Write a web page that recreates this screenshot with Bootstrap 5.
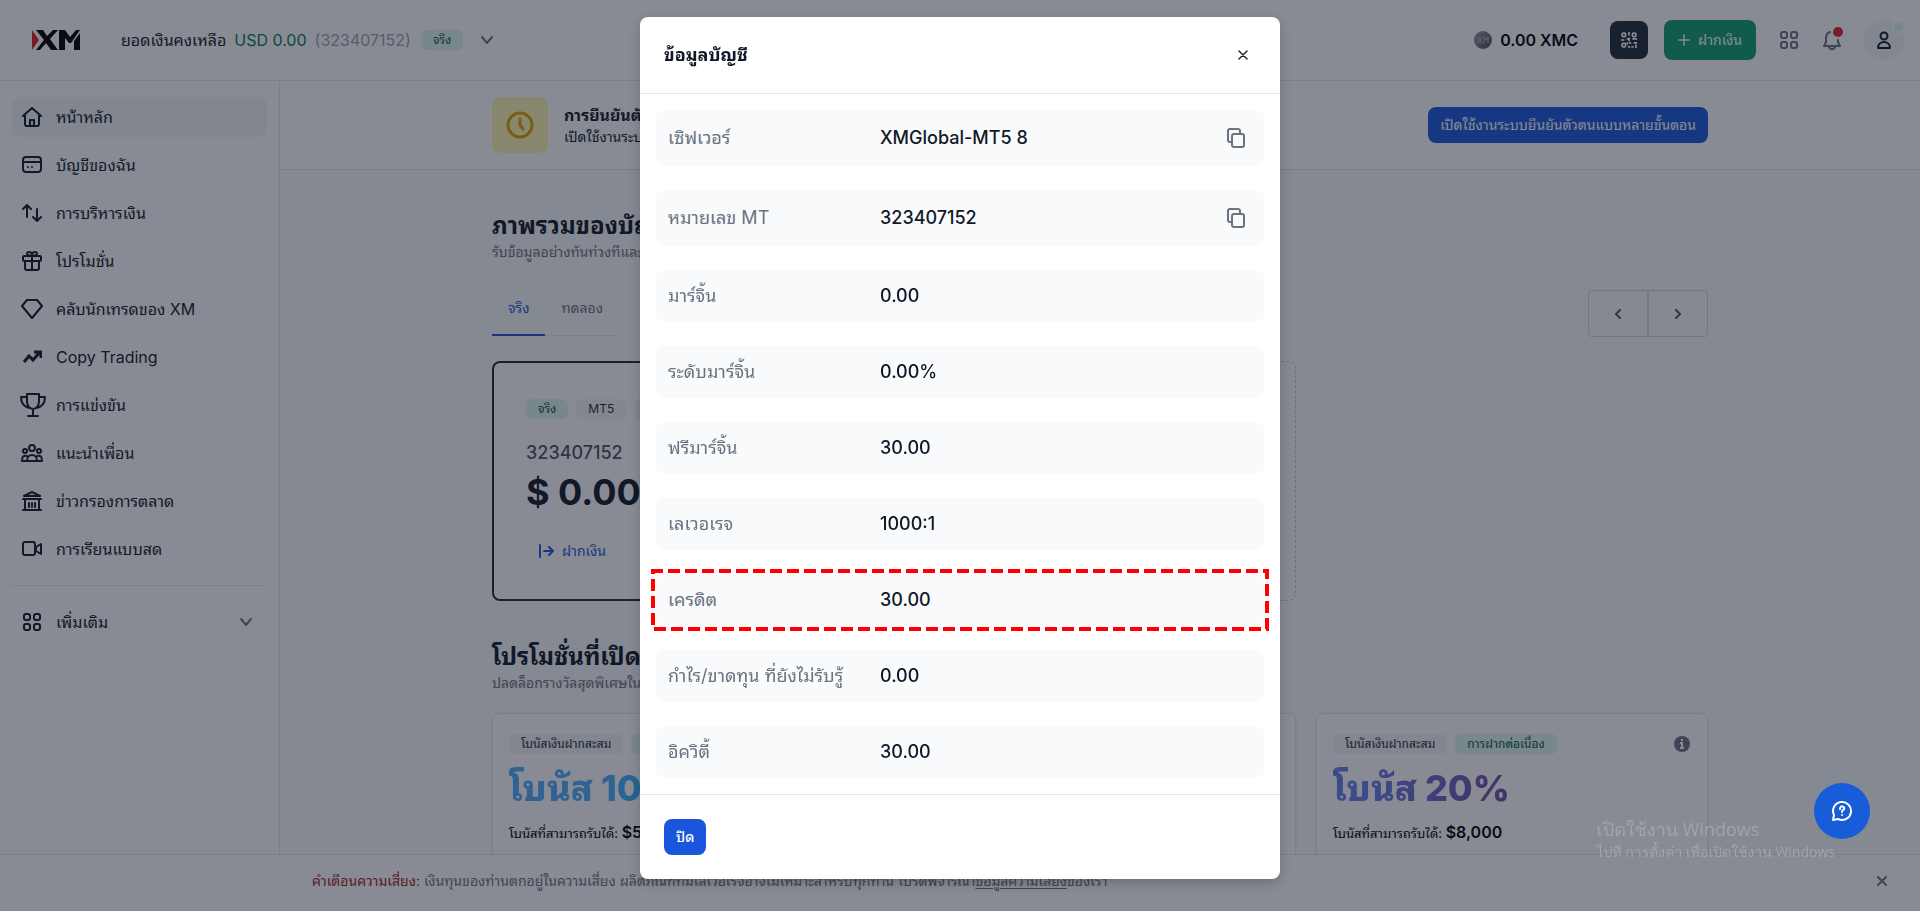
<!DOCTYPE html>
<html lang="th">
<head>
<meta charset="utf-8">
<meta name="viewport" content="width=device-width, initial-scale=1">
<title>XM</title>
<link href="https://cdn.jsdelivr.net/npm/bootstrap@5.3.0/dist/css/bootstrap.min.css" rel="stylesheet">
<script src="https://cdn.jsdelivr.net/npm/bootstrap@5.3.0/dist/js/bootstrap.bundle.min.js" defer></script>
<style>
:root{--ink:#111928;--muted:#6b7280;--line:#e5e7eb;--blue:#1a56db;--green:#0e9f6e}
body{font-family:Inter,"Leelawadee UI",Tahoma,"Noto Sans Thai Looped",Loma,"Liberation Sans",sans-serif;color:var(--ink);background:#f9fafb;font-size:16px;line-height:24px;overflow:hidden}
a{color:inherit;text-decoration:none}
svg{display:block;flex:none}
.ic{fill:none;stroke:currentColor;stroke-width:2;stroke-linecap:round;stroke-linejoin:round}
.shell{height:100vh}
.topbar{height:81px;border-bottom:1px solid var(--line);padding:0 16px 0 32px;background:#fff}
.balance{margin-left:41px}
.usd{color:#057a55}
.acc-id{color:#9ca3af;margin-right:2px}
.muted{color:var(--muted)}
.tag{font-size:12px;line-height:20px;padding:0 12px;border-radius:6px;background:#f3f4f6;color:#1f2a37;white-space:nowrap}
.tag-green{background:#def7ec;color:#03543f}
.side{width:280px;border-right:1px solid var(--line);padding:16px 12px;background:#fff}
.side .nav-link{height:40px;padding:0 10px;border-radius:8px;color:var(--ink);display:flex;align-items:center;gap:14px;margin-bottom:8px}
.side .nav-link.active{background:#f3f4f6}
.side hr{margin:16px 0;color:#9ca3af}
.side .wide{margin:0 -1px}
.side .trophy{margin:0 -4px 0 -2px}
.inner{max-width:1280px;margin:0 auto;padding:0 32px}
.banner{background:#fff;border-bottom:1px solid var(--line);padding:16px 0}
.btn{font-size:14px;line-height:20px;border-radius:8px;border:0}
.btn-blue,.btn-blue:hover{background:var(--blue);color:#fff;padding:8px 12px}
.btn-green{background:var(--green);color:#fff;height:40px;padding:0 14px}
.btn-qr{background:#1f2a37;color:#fff;width:38px;height:38px;padding:0}
.clock{width:56px;height:56px;border-radius:8px;background:#fdf6b2;color:#e3a008}
.clock .ic{stroke-width:3}
.avatar{width:40px;height:40px;background:#f3f4f6;color:var(--ink);border-radius:50%;margin-left:22px}
.dot{position:absolute;border-radius:50%}
.dot-red{width:10px;height:10px;background:#e02424;right:-1px;top:-2px}
.dot-mint{width:14px;height:14px;background:#def7ec;border:2px solid #fff;right:-2px;top:0}
.t14{font-size:14px;line-height:20px}
h2{font-size:24px;line-height:32px;font-weight:700;margin:0}
.tabrow{padding:28px 0 24px}
.tabs2{border-bottom:1px solid var(--line)}
.tabs2 .nav-link{padding:8px 16px 16px;font-size:14px;line-height:20px;color:var(--muted);border:0;border-bottom:2px solid transparent;margin-bottom:-1px;background:none}
.tabs2 .nav-link.active{color:var(--blue);border-color:var(--blue)}
.pager .btn{width:60px;height:47px;border:1px solid #d1d5db;border-radius:4px 0 0 4px;color:#4b5563}
.pager .btn:last-child{border-radius:0 4px 4px 0}
.pager .btn svg{margin:auto}
.cards3{display:grid;grid-template-columns:repeat(3,1fr);gap:20px}
.acct{height:240px;border:2px solid #1f2a37;border-radius:8px;background:#fff;padding:36px 32px}
.acct-empty{border:1px dashed #c3c8d0;border-radius:8px}
.acct-no{font-size:18px;line-height:28px;font-weight:500;color:#4b5563;margin-top:20px}
.big{font-size:36px;line-height:50px;font-weight:700}
.promo{border:1px solid var(--line);border-radius:8px;background:#fff;padding:20px 16px;height:240px;box-shadow:0 1px 3px rgba(0,0,0,.08)}
.promo .amount{font-size:16px;font-weight:600;color:#000}
.promo .cap{font-size:13px;color:#000}
.grad{background-clip:text;-webkit-background-clip:text;color:transparent;width:max-content;line-height:64px;font-weight:800;margin-top:2px}
.g1{background-image:linear-gradient(90deg,#4facfe 50%,#00c2fe)}
.g2{background-image:linear-gradient(90deg,#667eea 20%,#764ba2)}
.main{background:#f9fafb;min-width:0;overflow:hidden}
.risk{height:57px;border-top:1px solid var(--line);background:#fff;padding:0 32px 4px 312px;position:fixed;left:0;right:0;bottom:0}
.risk b{color:#9b1c1c;font-weight:400}
.risk u{text-underline-offset:2px}
.modal-backdrop{--bs-backdrop-bg:#111827;--bs-backdrop-opacity:.5}
.modal-dialog{max-width:640px;margin:17px auto}
.modal-content{border:0;border-radius:8px;box-shadow:0 4px 12px rgba(0,0,0,.2)}
.modal-header{height:77px;padding:0 24px;border-color:var(--line)}
.modal-title{font-size:18px;line-height:28px;font-weight:700}
.modal-body{padding:16px;display:grid;gap:24px}
.info{background:#f9fafb;border-radius:8px;padding:12px;font-size:18px;line-height:28px;margin:0}
.info dt{width:212px;font-weight:400;color:var(--muted);white-space:nowrap}
.info dd{margin:0;flex:1;font-weight:500}
.info .btn{padding:6px;color:var(--muted)}
.dashes{position:absolute;top:-5px;left:-5px;width:calc(100% + 10px);height:calc(100% + 10px)}
.dashes rect{x:2px;y:2px;width:calc(100% - 4px);height:calc(100% - 4px);fill:none;stroke:red;stroke-width:4px;stroke-dasharray:12 5;stroke-dashoffset:2px}
.modal-footer{padding:24px;border-color:var(--line);justify-content:flex-start}
.modal-footer>*{margin:0;font-weight:500}
.help{position:fixed;right:50px;bottom:72px;width:56px;height:56px;border-radius:50%;background:#175cd9!important;color:#fff;z-index:1070}
.wm{position:fixed;right:85px;bottom:48px;z-index:1065;color:#a3a4a6;font-family:"Open Sans","Leelawadee UI",Loma,sans-serif;pointer-events:none}
.wm div{font-size:18px;line-height:24px}
.wm p{font-size:14px;line-height:22px;margin:0}
</style>
</head>
<body>
<div class="shell d-flex flex-column">
<header class="topbar d-flex align-items-center flex-shrink-0">
  <a href="#" aria-label="XM"><svg width="48" height="20" viewBox="0 0 48 20"><path fill="#e11b22" d="M0 0l7 10-7 10z"/><path fill="#000" d="M4 0h7l4 6 6-6h5l-8 9 8 11h-7l-5-7-6 7H4l8-10zM27 0h6l5 7 6-7h4l-9 13h-2l-4-5v12h-6zM48 3v17h-6v-9z"/></svg></a>
  <div class="balance d-flex align-items-center gap-2 flex-grow-1">
    <span>ยอดเงินคงเหลือ</span><span class="usd">USD 0.00</span><span class="acc-id">(323407152)</span><span class="tag tag-green">จริง</span>
    <button class="btn p-0 ms-2 muted" aria-label="บัญชี"><svg class="ic" width="16" height="16" viewBox="0 0 16 16"><path d="M3 5l5 6 5-6"/></svg></button>
  </div>
  <div class="d-flex align-items-center">
    <svg class="me-2" width="18" height="18" viewBox="0 0 18 18"><defs><linearGradient id="coin" x1="0" y1="0" x2="1" y2="1"><stop offset="0" stop-color="#9a9aa0"/><stop offset=".5" stop-color="#77777d"/><stop offset="1" stop-color="#4a4a50"/></linearGradient></defs><circle cx="9" cy="9" r="9" fill="url(#coin)"/><path d="M4 6l4 6M8 6l-4 6M10 12V6l2 3 2-3v6" fill="none" stroke="#b5b5bb"/></svg>
    <span class="fw-semibold me-4 text-black">0.00 XMC</span>
    <button class="btn btn-qr d-flex align-items-center justify-content-center ms-2 me-3" aria-label="QR"><svg width="16" height="16" viewBox="0 0 14 14" fill="none" stroke="currentColor" stroke-width="1.500"><rect x="1" y="1" width="3" height="3" rx="1"/><rect x="10" y="1" width="3" height="3" rx="1"/><rect x="1" y="10" width="3" height="3" rx="1"/><path d="M7 0v3M0 7h3M5 6h3M7 5v3M10 6h4M7 9.500h2M5.500 9v2M7 12v2M9 13h2M11 9.500h3M13 11v3"/></svg></button>
    <button class="btn btn-green d-flex align-items-center gap-2"><svg class="ic" width="12" height="12" viewBox="0 0 12 12"><path d="M6 1v10M1 6h10" stroke-width="1.500"/></svg>ฝากเงิน</button>
    <button class="btn p-0 ms-4 muted" aria-label="แอป"><svg class="ic" width="18" height="18" viewBox="0 0 18 18"><rect x="1" y="1" width="6" height="6" rx="2"/><rect x="11" y="1" width="6" height="6" rx="2"/><rect x="1" y="11" width="6" height="6" rx="2"/><rect x="11" y="11" width="6" height="6" rx="2"/></svg></button>
    <button class="btn p-0 ms-4 muted position-relative" aria-label="แจ้งเตือน"><svg class="ic" width="20" height="22" viewBox="0 0 20 22"><path d="M8 3C5 4 4 6 4 9v4l-2 4h16l-2-4v-2M7 18c1 3 5 3 6 0"/></svg><span class="dot dot-red"></span></button>
    <a href="#" class="avatar d-flex align-items-center justify-content-center position-relative" aria-label="โปรไฟล์"><svg class="ic" width="14" height="18" viewBox="0 0 14 18"><circle cx="7" cy="5" r="3.500"/><path d="M1 17c0-8 12-8 12 0z"/></svg><span class="dot dot-mint"></span></a>
  </div>
</header>
<div class="d-flex flex-grow-1" style="min-height:0">
<nav class="side flex-shrink-0">
  <a class="nav-link active" href="#"><svg class="ic" width="20" height="20" viewBox="0 0 20 20"><path d="M1 9l9-8 9 8M3 8v9q0 2 2 2h10q2 0 2-2V8M8 19v-6h4v6"/></svg>หน้าหลัก</a>
  <a class="nav-link" href="#"><svg class="ic" width="20" height="20" viewBox="0 0 20 20"><rect x="1" y="2" width="18" height="15" rx="3"/><path d="M1 7h18M6 12v0M10 12v0"/></svg>บัญชีของฉัน</a>
  <a class="nav-link" href="#"><svg class="ic" width="20" height="20" viewBox="0 0 20 20"><path d="M5 14V2M1 6l4-4 4 4M15 6v12M11 14l4 4 4-4"/></svg>การบริหารเงิน</a>
  <a class="nav-link" href="#"><svg class="ic" width="20" height="20" viewBox="0 0 20 20"><rect x="1" y="5" width="18" height="5" rx="1"/><path d="M3 10v7q0 2 2 2h10q2 0 2-2v-7M10 5v14M10 5C4 5 4 1 7 1c2 0 3 2 3 4 0-2 1-4 3-4 3 0 3 4-3 4"/></svg>โปรโมชั่น</a>
  <a class="nav-link" href="#"><svg class="ic wide" width="22" height="20" viewBox="0 0 22 20"><path d="M6 1h10l5 6-10 12L1 7z"/></svg>คลับนักเทรดของ XM</a>
  <a class="nav-link" href="#"><svg class="ic" width="20" height="20" viewBox="0 0 20 20"><path d="M2 15l5-6 4 4 7-8M12 5h7v6" style="stroke-linecap:butt;stroke-linejoin:miter;stroke-width:3px"/></svg>Copy Trading</a>
  <a class="nav-link" href="#"><svg class="ic trophy" width="26" height="24" viewBox="0 0 26 24"><path d="M7 1h12v7c0 5-3 8-6 8s-6-3-6-8zM7 4H1c0 7 3 10 9 11M19 4h6c0 7-3 10-9 11M13 16v7M8 23h10"/></svg><span>การแข่งขัน</span></a>
  <a class="nav-link" href="#"><svg class="ic wide" width="22" height="18" viewBox="0 0 22 18"><circle cx="11" cy="4" r="3"/><circle cx="4" cy="7" r="2"/><circle cx="18" cy="7" r="2"/><path d="M6 17c0-8 10-8 10 0zM6 17H1c0-4 1-6 5-5M16 17h5c0-4-1-6-5-5"/></svg>แนะนำเพื่อน</a>
  <a class="nav-link" href="#"><svg class="ic" width="20" height="20" viewBox="0 0 20 20"><path d="M10 1l8 4H2zM1 8h18M3 8v11M17 8v11M1 19h18M7 12v4M10 12v4M13 12v4"/></svg>ข่าวกรองการตลาด</a>
  <a class="nav-link" href="#"><svg class="ic" width="20" height="16" viewBox="0 0 20 16"><rect x="1" y="1" width="12" height="13" rx="2"/><path d="M14 6l5-3v10l-5-3z"/></svg>การเรียนแบบสด</a>
  <hr>
  <a class="nav-link" href="#"><svg class="ic" width="20" height="20" viewBox="0 0 20 20"><rect x="2" y="2" width="6" height="6" rx="2"/><rect x="12" y="2" width="6" height="6" rx="2"/><rect x="2" y="12" width="6" height="6" rx="2"/><rect x="12" y="12" width="6" height="6" rx="2"/></svg>เพิ่มเติม<svg class="ic ms-auto muted me-1" width="14" height="14" viewBox="0 0 14 14"><path d="M2 4l5 6 5-6"/></svg></a>
</nav>
<main class="main flex-grow-1">
  <section class="banner"><div class="inner d-flex align-items-center">
    <span class="clock d-flex align-items-center justify-content-center me-3"><svg class="ic" width="28" height="28" viewBox="0 0 28 28"><circle cx="14" cy="14" r="12"/><path d="M14 8v6l3 4"/></svg></span>
    <div class="flex-grow-1"><div class="fw-bold">การยืนยันตัว</div><div class="t14">เปิดใช้งานระบบ</div></div>
    <button class="btn btn-blue">เปิดใช้งานระบบยืนยันตัวตนแบบหลายขั้นตอน</button>
  </div></section>
  <div class="inner pt-4">
    <div class="pt-3"><h2>ภาพรวมของบัญชี</h2><p class="t14 muted mb-0">รับข้อมูลอย่างทันท่วงทีและ</p></div>
    <div class="tabrow d-flex align-items-start justify-content-between">
      <div class="nav tabs2"><button class="nav-link active">จริง</button><button class="nav-link">ทดลอง</button></div>
      <div class="pager d-flex"><button class="btn" aria-label="ก่อนหน้า"><svg class="ic" width="8" height="10" viewBox="0 0 8 10"><path d="M6 1L2 5l4 4"/></svg></button><button class="btn" aria-label="ถัดไป"><svg class="ic" width="8" height="10" viewBox="0 0 8 10"><path d="M2 1l4 4-4 4"/></svg></button></div>
    </div>
    <div class="cards3">
      <article class="acct">
        <div class="d-flex gap-2"><span class="tag tag-green">จริง</span><span class="tag">MT5</span><span class="tag">Standard</span></div>
        <div class="acct-no">323407152</div>
        <div class="big">$ 0.00</div>
        <a href="#" class="d-flex align-items-center gap-2 t14 mt-4 ms-2 ps-1" style="color:#1a56db"><svg class="ic" width="16" height="14" viewBox="0 0 16 14"><path d="M2 1v12M6 7h9M11 3l4 4-4 4"/></svg>ฝากเงิน</a>
      </article>
      <div class="acct-empty"></div>
    </div>
    <div class="pt-4 mt-3"><h2>โปรโมชั่นที่เปิด</h2><p class="t14 muted mb-0">ปลดล็อกรางวัลสุดพิเศษใน</p></div>
    <div class="cards3 pt-3 mt-1">
      <article class="promo"><div class="d-flex gap-2"><span class="tag">โบนัสเงินฝากสะสม</span><span class="tag tag-green">การฝาก</span></div><div class="big grad g1">โบนัส 100%</div><div class="cap">โบนัสที่สามารถรับได้: <span class="amount">$500</span></div></article>
      <article class="promo"></article>
      <article class="promo"><div class="d-flex gap-2 align-items-center"><span class="tag">โบนัสเงินฝากสะสม</span><span class="tag tag-green">การฝากต่อเนื่อง</span><svg class="ms-auto" width="18" height="18" viewBox="0 0 18 18"><circle cx="9" cy="9" r="8" fill="#6b7280"/><path d="M9 4v2M7 8h2v5M7 13h4" fill="none" stroke="#fff" stroke-width="2"/></svg></div><div class="big grad g2">โบนัส 20%</div><div class="cap">โบนัสที่สามารถรับได้: <span class="amount">$8,000</span></div></article>
    </div>
  </div>
</main>
</div>
<footer class="risk d-flex align-items-center justify-content-between t14 muted">
  <div><b>คำเตือนความเสี่ยง:</b> เงินทุนของท่านตกอยู่ในความเสี่ยง ผลิตภัณฑ์ที่มีเลเวอเรจอาจไม่เหมาะสำหรับทุกท่าน โปรดพิจารณา<a href="#"><u>ข้อมูลความเสี่ยง</u></a>ของเรา</div>
  <button class="btn p-0 muted" aria-label="ปิด"><svg class="ic" width="12" height="12" viewBox="0 0 12 12"><path d="M2 2l8 8M10 2l-8 8"/></svg></button>
</footer>
</div>

<div class="modal-backdrop show"></div>
<div class="modal show d-block" tabindex="-1" role="dialog" aria-labelledby="mt">
<div class="modal-dialog"><div class="modal-content">
  <div class="modal-header"><h5 class="modal-title" id="mt">ข้อมูลบัญชี</h5><button class="btn p-2" aria-label="ปิด"><svg class="ic" width="10" height="10" viewBox="0 0 10 10"><path stroke-width="1.500" d="M1 1l8 8M9 1L1 9"/></svg></button></div>
  <div class="modal-body">
    <dl class="info d-flex align-items-center"><dt>เซิฟเวอร์</dt><dd>XMGlobal-MT5 8</dd><button class="btn" aria-label="คัดลอก"><svg class="ic" width="20" height="20" viewBox="0 0 20 20"><rect x="6" y="6" width="12" height="13" rx="2"/><path d="M6 14H4q-2 0-2-2V3q0-2 2-2h8q2 0 2 2v3"/></svg></button></dl>
    <dl class="info d-flex align-items-center"><dt>หมายเลข MT</dt><dd>323407152</dd><button class="btn" aria-label="คัดลอก"><svg class="ic" width="20" height="20" viewBox="0 0 20 20"><rect x="6" y="6" width="12" height="13" rx="2"/><path d="M6 14H4q-2 0-2-2V3q0-2 2-2h8q2 0 2 2v3"/></svg></button></dl>
    <dl class="info d-flex"><dt>มาร์จิ้น</dt><dd>0.00</dd></dl>
    <dl class="info d-flex"><dt>ระดับมาร์จิ้น</dt><dd>0.00%</dd></dl>
    <dl class="info d-flex"><dt>ฟรีมาร์จิ้น</dt><dd>30.00</dd></dl>
    <dl class="info d-flex"><dt>เลเวอเรจ</dt><dd>1000:1</dd></dl>
    <dl class="info d-flex position-relative"><dt>เครดิต</dt><dd>30.00</dd><svg class="dashes" aria-hidden="true"><rect/></svg></dl>
    <dl class="info d-flex"><dt>กำไร/ขาดทุน ที่ยังไม่รับรู้</dt><dd>0.00</dd></dl>
    <dl class="info d-flex"><dt>อิควิตี้</dt><dd>30.00</dd></dl>
  </div>
  <div class="modal-footer"><button class="btn btn-blue">ปิด</button></div>
</div></div>
</div>
<button class="btn help d-flex align-items-center justify-content-center" aria-label="ช่วยเหลือ"><svg class="ic" width="22" height="22" viewBox="0 0 22 22"><path d="M2 20l1-5a9 9 0 1 1 4 4zM9 9c0-4 5-3 4 0 0 1-2 1-2 3M11 15v0"/></svg></button>
<div class="wm"><div>เปิดใช้งาน Windows</div><p>ไปที่ การตั้งค่า เพื่อเปิดใช้งาน Windows</p></div>
</body>
</html>
